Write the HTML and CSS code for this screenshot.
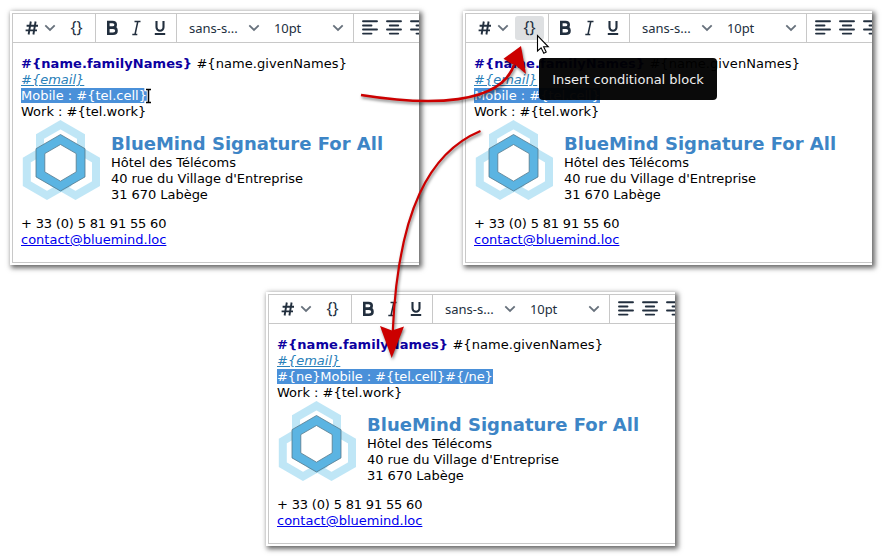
FILE: index.html
```
<!DOCTYPE html>
<html lang="en">
<head>
<meta charset="utf-8">
<title>Insert conditional block</title>
<link rel="stylesheet" href="styles.css">
</head>
<body>
<svg class="defs" width="0" height="0">
  <symbol id="hash" viewBox="0 0 24 24"><path d="M10.800 5.500 8.600 18.500M15.600 5.500l-2.200 13M6.600 9.700h11.400M5.600 14.400H17" fill="none" stroke="#222f3e" stroke-width="1.900"/></symbol>
  <symbol id="chev" viewBox="0 0 12 24"><path d="M1.300 9.300 6 13.900l4.700-4.600" fill="none" stroke="#67717c" stroke-width="1.800"/></symbol>
  <symbol id="bold" viewBox="0 0 24 24"><path d="M8.300 6h4.200c2.100 0 3.200 1 3.200 2.800s-1.100 2.800-3.200 2.800H8.300zM8.300 11.600H13c2.300 0 3.500 1.100 3.500 3.100s-1.200 3.100-3.500 3.100H8.300z" fill="none" stroke="#222f3e" stroke-width="2.600"/></symbol>
  <symbol id="ital" viewBox="0 0 24 24"><path d="M10.500 5.500h6M8.300 18.500h5M13.800 5.500 11 18.500" fill="none" stroke="#222f3e" stroke-width="1.500"/></symbol>
  <symbol id="under" viewBox="0 0 24 24"><path d="M8.500 5v6.200a3.500 3.500 0 0 0 7 0V5M6.800 18h10.400" fill="none" stroke="#222f3e" stroke-width="2.100"/></symbol>
  <symbol id="left" viewBox="0 0 24 24"><path d="M5 5.300h14M5 9.500h8.500M5 13.500h14M5 17.600h8.500" fill="none" stroke="#222f3e" stroke-width="1.900" stroke-linecap="round"/></symbol>
  <symbol id="center" viewBox="0 0 24 24"><path d="M5 5.300h14M7.800 9.500h8.400M5 13.500h14M7.800 17.600h8.400" fill="none" stroke="#222f3e" stroke-width="1.900" stroke-linecap="round"/></symbol>
  <symbol id="right" viewBox="0 0 24 24"><path d="M5 5.300h14M10.500 9.500H19M5 13.500h14M10.500 17.600H19" fill="none" stroke="#222f3e" stroke-width="1.900" stroke-linecap="round"/></symbol>
  <symbol id="logo" viewBox="0 0 80 80">
    <g fill="none" stroke="#7fcdee" stroke-opacity=".5" stroke-width="8">
      <path d="M39.500 4.700 60 16.500v23.600L39.500 52 19 40.100V16.500z"/>
      <path d="M26 28.200 46.500 40v23.600L26 75.400 5.800 63.600V40z"/>
      <path d="M54.500 28.200 75 40v23.600L54.500 75.400 34 63.600V40z"/>
    </g>
    <path d="M39.500 14.500 64 28.700v28.200L39.500 71 15 56.900V28.700z" fill="#5bb4e2" stroke="#56798c" stroke-width=".8"/>
    <path d="M39.500 24.500 23.800 33.600v18.300l15.700 9.300 15.700-9.300V33.600z" fill="#fff" stroke="#56798c" stroke-width=".8"/>
  </symbol>
</svg>
<main class="board">
  <section class="panel">
    <div class="editor">
      <div class="toolbar">
        <div class="group insert"><svg class="ic"><use href="#hash"/></svg><svg class="chev"><use href="#chev"/></svg><span class="braces">{}</span></div>
        <div class="group style"><svg class="ic"><use href="#bold"/></svg><svg class="ic"><use href="#ital"/></svg><svg class="ic"><use href="#under"/></svg></div>
        <div class="group fonts"><span class="family">sans-s...</span><svg class="chev"><use href="#chev"/></svg><span class="size">10pt</span><svg class="chev"><use href="#chev"/></svg></div>
        <div class="group align"><svg class="ic"><use href="#left"/></svg><svg class="ic"><use href="#center"/></svg><svg class="ic"><use href="#right"/></svg></div>
      </div>
      <div class="content">
        <p class="names"><b class="family-name">#{name.familyNames}</b> #{name.givenNames}</p>
        <p><i class="mail">#{email}</i></p>
        <p><span class="sel">Mobile : #{tel.cell}</span></p>
        <p>Work : #{tel.work}</p>
        <div class="card">
          <svg class="logo"><use href="#logo"/></svg>
          <div class="address"><h1>BlueMind Signature For All</h1><p>Hôtel des Télécoms</p><p>40 rue du Village d'Entreprise</p><p>31 670 Labège</p></div>
        </div>
        <p class="phone">+ 33 (0) 5 81 91 55 60</p>
        <p><a href="#">contact@bluemind.loc</a></p>
      </div>
    </div>
  </section>
  <section class="panel">
    <div class="editor">
      <div class="toolbar">
        <div class="group insert"><svg class="ic"><use href="#hash"/></svg><svg class="chev"><use href="#chev"/></svg><span class="braces hover">{}</span></div>
        <div class="group style"><svg class="ic"><use href="#bold"/></svg><svg class="ic"><use href="#ital"/></svg><svg class="ic"><use href="#under"/></svg></div>
        <div class="group fonts"><span class="family">sans-s...</span><svg class="chev"><use href="#chev"/></svg><span class="size">10pt</span><svg class="chev"><use href="#chev"/></svg></div>
        <div class="group align"><svg class="ic"><use href="#left"/></svg><svg class="ic"><use href="#center"/></svg><svg class="ic"><use href="#right"/></svg></div>
      </div>
      <div class="content">
        <p class="names"><b class="family-name">#{name.familyNames}</b> #{name.givenNames}</p>
        <p><i class="mail">#{email}</i></p>
        <p><span class="sel">Mobile : #{tel.cell}</span></p>
        <p>Work : #{tel.work}</p>
        <div class="card">
          <svg class="logo"><use href="#logo"/></svg>
          <div class="address"><h1>BlueMind Signature For All</h1><p>Hôtel des Télécoms</p><p>40 rue du Village d'Entreprise</p><p>31 670 Labège</p></div>
        </div>
        <p class="phone">+ 33 (0) 5 81 91 55 60</p>
        <p><a href="#">contact@bluemind.loc</a></p>
      </div>
    </div>
    <div class="tooltip">Insert conditional block</div>
  </section>
  <section class="panel result">
    <div class="editor">
      <div class="toolbar">
        <div class="group insert"><svg class="ic"><use href="#hash"/></svg><svg class="chev"><use href="#chev"/></svg><span class="braces">{}</span></div>
        <div class="group style"><svg class="ic"><use href="#bold"/></svg><svg class="ic"><use href="#ital"/></svg><svg class="ic"><use href="#under"/></svg></div>
        <div class="group fonts"><span class="family">sans-s...</span><svg class="chev"><use href="#chev"/></svg><span class="size">10pt</span><svg class="chev"><use href="#chev"/></svg></div>
        <div class="group align"><svg class="ic"><use href="#left"/></svg><svg class="ic"><use href="#center"/></svg><svg class="ic"><use href="#right"/></svg></div>
      </div>
      <div class="content">
        <p class="names"><b class="family-name">#{name.familyNames}</b> #{name.givenNames}</p>
        <p><i class="mail">#{email}</i></p>
        <p><span class="sel tagged">#{ne}Mobile : #{tel.cell}#{/ne}</span></p>
        <p>Work : #{tel.work}</p>
        <div class="card">
          <svg class="logo"><use href="#logo"/></svg>
          <div class="address"><h1>BlueMind Signature For All</h1><p>Hôtel des Télécoms</p><p>40 rue du Village d'Entreprise</p><p>31 670 Labège</p></div>
        </div>
        <p class="phone">+ 33 (0) 5 81 91 55 60</p>
        <p><a href="#">contact@bluemind.loc</a></p>
      </div>
    </div>
  </section>
  <svg class="overlay" viewBox="0 0 883 559">
    <path d="M146 89.500h5M148.500 90v13M146 102.500h5" fill="none" stroke="#fff" stroke-width="3.400" stroke-linecap="square"/>
    <path d="M146 89.500h5M148.500 90v12M146 102.500h5" fill="none" stroke="#000" stroke-width="1.500"/>
    <g class="arrows">
      <path d="M361 95C430 106 500 105 514 65" fill="none" stroke="#c00" stroke-width="2.600"/>
      <path d="M521 46 503.500 58.700 511 63.500 516 65.500 526 74z" fill="#c00"/>
      <path d="M480.500 131C430 152 398 210 392.800 331" fill="none" stroke="#c00" stroke-width="2.200"/>
      <path d="M391.700 358 380 326 392 330.500 404 326.500z" fill="#c00"/>
    </g>
    <path d="M537.500 35.500v15.500l3.600-3.200 2.700 5.400 2.400-1.200-2.600-5.200h4.700z" fill="#fff" stroke="#000" stroke-width="1.100"/>
  </svg>
</main>
</body>
</html>
```
FILE: styles.css
```
* { box-sizing: border-box; }
body { margin: 0; background: #fff; color: #000; font: 13px/16px "DejaVu Sans", sans-serif; }
p, h1 { margin: 0; white-space: nowrap; }
.defs { position: absolute; }
.board {
  position: relative;
  width: 883px;
  height: 559px;
  padding: 11px 0 0 10px;
  display: grid;
  grid-template-columns: 409px 409px;
  grid-template-rows: 254px 254px;
  gap: 27px 44px;
  overflow: hidden;
}
.panel {
  position: relative;
  width: 409px;
  padding: 2px 0 2px 2px;
  background: #fff;
  box-shadow: 2px 2px 5px 1px rgba(0, 0, 0, .6);
}
.result { grid-column: 1 / 3; margin-left: 256px; }
.editor { height: 250px; border: 1px solid #c8c8c8; border-right: 0; overflow: hidden; }
.toolbar { display: flex; height: 29px; border-bottom: 1px solid #c8c8c8; }
.group { display: flex; align-items: center; flex: none; height: 28px; border-right: 1px solid #c8c8c8; color: #222f3e; }
.insert { width: 83px; padding-left: 7px; }
.style { width: 81px; padding-left: 4px; }
.fonts { width: 177px; padding-left: 12px; font: 13px/24px "Noto Sans", sans-serif; }
.align { border: 0; padding-left: 4px; }
.ic { width: 24px; height: 24px; flex: none; }
.chev { width: 12px; height: 24px; flex: none; }
.braces { width: 29px; height: 24px; margin-left: 6px; border-radius: 3px; text-align: center; font: 16px/22px "Noto Sans", sans-serif; }
.hover { background: #dee0e2; }
.family { width: 58px; margin-right: 1px; }
.size { width: 58px; margin-left: 14px; letter-spacing: -.1px; }
.content { padding: 13px 0 0 8px; }
.names { letter-spacing: .07px; }
.family-name { color: #0c00a0; }
.mail { color: #2980b9; text-decoration: underline; }
.sel { display: inline-block; height: 15px; line-height: 16px; background: #4a90d9; color: #fff; vertical-align: top; }
.tagged { letter-spacing: -.06px; }
.card { display: flex; height: 96px; }
.logo { width: 80px; height: 80px; flex: none; }
.address { margin: 12px 0 0 10px; letter-spacing: -.04px; }
h1 { color: #3d85c6; font-size: 18px; line-height: 23px; letter-spacing: 0; }
.phone { letter-spacing: -.18px; }
a { color: #00e; }
.tooltip {
  position: absolute;
  left: 76px;
  top: 47px;
  width: 178px;
  height: 42px;
  border-radius: 4px;
  background: rgba(0, 0, 0, .96);
  color: #eee;
  text-align: center;
  line-height: 43px;
}
.overlay { position: absolute; left: 0; top: 0; width: 883px; height: 559px; }
.arrows { filter: drop-shadow(1px 2px 1.500px rgba(0, 0, 0, .5)); }
```
